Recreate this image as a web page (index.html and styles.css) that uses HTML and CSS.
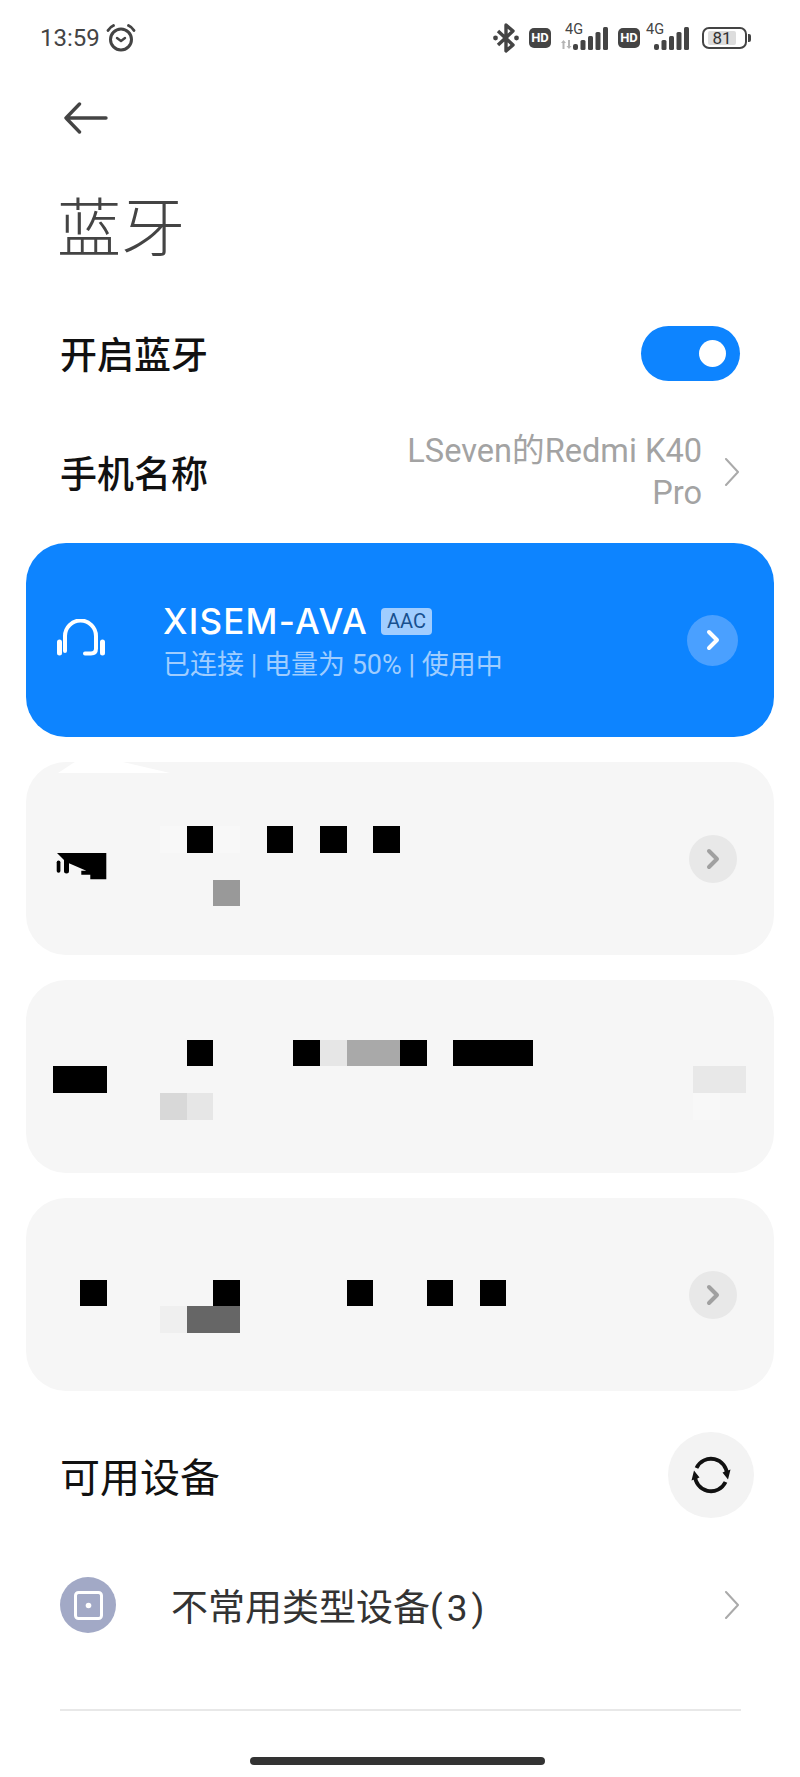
FILE: index.html
```html
<!DOCTYPE html>
<html lang="zh-CN">
<head>
  <meta charset="UTF-8">
  <meta name="viewport" content="width=device-width, initial-scale=1.0">
  <title>蓝牙</title>
  <link rel="stylesheet" href="styles.css">
</head>
<body>
  <div class="page">
    <!-- Status bar -->
    <div class="status">
      <div class="status-left">
        <span class="clock">13:59</span>
        <svg class="alarm" width="30" height="28" viewBox="0 0 30 28" fill="none" stroke="#444" stroke-linecap="round">
          <circle cx="15" cy="15.5" r="10.5" stroke-width="3"/>
          <path d="M11 14l4 3 4-3" stroke-width="2.4" stroke-linejoin="round"/>
          <path d="M2 6.5Q4 3 7.5 1.5M28 6.5Q26 3 22.5 1.5" stroke-width="2.8"/>
        </svg>
      </div>
      <div class="status-right">
        <svg class="bt" width="26" height="30" viewBox="0 0 26 30" fill="none" stroke="#444" stroke-width="3.4" stroke-linejoin="round">
          <path d="M5 8l15 14-7 6V2l7 6L5 22"/>
          <circle cx="2.5" cy="15" r="2.4" fill="#444" stroke="none"/>
          <circle cx="23.5" cy="15" r="2.4" fill="#444" stroke="none"/>
        </svg>
        <span class="hd">HD</span>
        <div class="net net-first">
          <span class="net-label">4G</span>
          <svg class="arrows" width="12" height="9" viewBox="0 0 12 9" fill="#b5b5b5"><path d="M1 3l2.5-3L6 3H4.5v6h-2V3zM6.5 6h1.5V0h2v6H11.500L9 9z"/></svg>
          <svg width="36" height="23" viewBox="0 0 36 23" fill="#444">
            <rect x="0" y="17" width="5" height="6" rx="2"/><rect x="7.500" y="13" width="5" height="10" rx="1.500"/><rect x="15" y="9" width="5" height="14" rx="1.500"/><rect x="22.500" y="5" width="5" height="18" rx="1.500"/><rect x="30" y="0" width="5" height="23" rx="1.500"/>
          </svg>
        </div>
        <span class="hd hd-second">HD</span>
        <div class="net net-second">
          <span class="net-label">4G</span>
          <svg width="36" height="23" viewBox="0 0 36 23" fill="#444">
            <rect x="0" y="17" width="5" height="6" rx="2"/><rect x="7.500" y="13" width="5" height="10" rx="1.500"/><rect x="15" y="9" width="5" height="14" rx="1.500"/><rect x="22.500" y="5" width="5" height="18" rx="1.500"/><rect x="30" y="0" width="5" height="23" rx="1.500"/>
          </svg>
        </div>
        <div class="battery"><span class="battery-level">81</span></div>
        <span class="battery-nub"></span>
      </div>
    </div>

    <!-- Header -->
    <div class="back">
      <svg width="44" height="32" viewBox="0 0 44 32" fill="none" stroke="#444" stroke-width="3.400" stroke-linecap="round" stroke-linejoin="round">
        <path d="M15.500 2L2 16l13.500 14M2 16h40"/>
      </svg>
    </div>
    <h1 class="title">蓝牙</h1>

    <div class="row row-switch">
      <span class="row-label">开启蓝牙</span>
      <span class="toggle"><span class="knob"></span></span>
    </div>
    <div class="row row-name">
      <span class="row-label">手机名称</span>
      <div class="row-value">
        <span class="value-text">LSeven的Redmi K40<br>Pro</span>
        <svg class="chevron" width="16" height="28" viewBox="0 0 16 28" fill="none" stroke="#aaa" stroke-width="2" stroke-linecap="round" stroke-linejoin="round"><path d="M2 1l12 13L2 27"/></svg>
      </div>
    </div>

    <!-- Paired devices -->
    <div class="cards">
      <div class="card card-active">
        <svg class="card-icon" width="48" height="38" viewBox="0 0 48 38" fill="none" stroke="#fff" stroke-linecap="round">
          <path d="M8 32V17a15.500 15.500 0 0 1 31 0v12.500q0 5-5 5h-6" stroke-width="4"/>
          <path d="M2.500 23v11M45.500 23v11" stroke-width="5"/>
        </svg>
        <div class="card-body">
          <div class="card-title"><span class="card-name">XISEM-AVA</span><span class="codec">AAC</span></div>
          <div class="card-sub">已连接 | 电量为 50% | 使用中</div>
        </div>
        <span class="card-go">
          <svg width="14" height="22" viewBox="0 0 14 22" fill="none" stroke="#fff" stroke-width="4" stroke-linecap="round" stroke-linejoin="round"><path d="M3 3l8 8-8 8"/></svg>
        </span>
      </div>
      <div class="card">
        <span class="card-notch"></span>
        <span class="card-go card-go-muted">
          <svg width="14" height="22" viewBox="0 0 14 22" fill="none" stroke="#a0a0a0" stroke-width="4" stroke-linecap="round" stroke-linejoin="round"><path d="M3 3l8 8-8 8"/></svg>
        </span>
      </div>
      <div class="card"></div>
      <div class="card">
        <span class="card-go card-go-muted">
          <svg width="14" height="22" viewBox="0 0 14 22" fill="none" stroke="#a0a0a0" stroke-width="4" stroke-linecap="round" stroke-linejoin="round"><path d="M3 3l8 8-8 8"/></svg>
        </span>
      </div>
    </div>

    <!-- Available devices -->
    <div class="available">
      <span class="available-label">可用设备</span>
      <span class="refresh">
        <svg width="40" height="40" viewBox="0 0 40 40" fill="none" stroke="#111" stroke-width="3.800">
          <path d="M5.500 13A16 16 0 0 1 36 20"/>
          <path d="M34.500 27A16 16 0 0 1 4 20"/>
          <path d="M31.500 17.500l8-3-2.500 10zM8.500 22.500l-8 3 2.500-10z" fill="#111" stroke="none"/>
        </svg>
      </span>
    </div>
    <div class="other">
      <span class="other-icon">
        <svg width="29" height="29" viewBox="0 0 29 29" fill="none" stroke="#fff" stroke-width="3">
          <rect x="1.500" y="1.500" width="26" height="26" rx="3"/>
          <circle cx="14.500" cy="14.500" r="2.800" fill="#fff" stroke="none"/>
        </svg>
      </span>
      <span class="other-label">不常用类型设备<span class="other-count">(3)</span></span>
      <svg class="chevron" width="16" height="28" viewBox="0 0 16 28" fill="none" stroke="#aaa" stroke-width="2" stroke-linecap="round" stroke-linejoin="round"><path d="M2 1l12 13L2 27"/></svg>
    </div>
    <div class="divider"></div>
    <div class="home-bar"></div>

    <!-- Redaction blocks sit over the cards on one 26.67px grid -->
    <div class="mosaic">
      <i class="cell col-6 row-31 tone-faint"></i>
      <i class="cell col-7 row-31 tone-black"></i>
      <i class="cell col-8 row-31 tone-faint"></i>
      <i class="cell col-10 row-31 tone-black"></i>
      <i class="cell col-12 row-31 tone-black"></i>
      <i class="cell col-14 row-31 tone-black"></i>
      <svg class="cell cell-wide col-2 row-32" viewBox="0 0 53.330 26.670" fill="#000">
        <path d="M4 0H53.330V26.300H37.300V21.700H28.300V17.700H33.300L16 10.300V18a2.500 2.500 0 0 1-5 0V7z"/>
        <rect x="3.700" y="7.400" width="3.700" height="12.300" rx="1.800"/>
      </svg>
      <i class="cell col-8 row-33 tone-99"></i>

      <i class="cell col-7 row-39 tone-black"></i>
      <i class="cell col-11 row-39 tone-black"></i>
      <i class="cell col-12 row-39 tone-e6"></i>
      <i class="cell col-13 row-39 tone-a9"></i>
      <i class="cell col-14 row-39 tone-a9"></i>
      <i class="cell col-15 row-39 tone-black"></i>
      <i class="cell col-17 row-39 tone-black"></i>
      <i class="cell col-18 row-39 tone-black"></i>
      <i class="cell col-19 row-39 tone-black"></i>
      <i class="cell col-2 row-40 tone-black"></i>
      <i class="cell col-3 row-40 tone-black"></i>
      <i class="cell col-26 row-40 tone-e8"></i>
      <i class="cell col-27 row-40 tone-e8"></i>
      <i class="cell col-6 row-41 tone-d8"></i>
      <i class="cell col-7 row-41 tone-e6"></i>
      <i class="cell col-26 row-41 tone-faint"></i>

      <i class="cell col-3 row-48 tone-black"></i>
      <i class="cell col-8 row-48 tone-black"></i>
      <i class="cell col-13 row-48 tone-black"></i>
      <i class="cell col-16 row-48 tone-black"></i>
      <i class="cell col-18 row-48 tone-black"></i>
      <i class="cell col-6 row-49 tone-ef"></i>
      <i class="cell col-7 row-49 tone-66"></i>
      <i class="cell col-8 row-49 tone-66"></i>
    </div>
  </div>
</body>
</html>
```

FILE: styles.css
```css
/* General Styles */
body {
  margin: 0;
  background-color: #fff;
  font-family: Roboto, "Noto Sans CJK SC", sans-serif;
}

.page {
  position: relative;
  width: 800px;
  height: 1777px;
  overflow: hidden;
}

/* Status bar */
.status {
  display: flex;
  justify-content: space-between;
  align-items: center;
  height: 76px;
  padding: 0 49px 0 40px;
}

.status-left,
.status-right {
  display: flex;
  align-items: center;
}

.clock {
  font-size: 24px;
  color: #444;
}

.alarm {
  margin-left: 6px;
  margin-top: -1px;
}

.hd {
  width: 22px;
  height: 20px;
  margin-left: 10px;
  border-radius: 5px;
  background-color: #444;
  color: #fff;
  font-size: 13px;
  font-weight: 700;
  line-height: 20px;
  text-align: center;
}

.hd-second {
  margin-left: 9px;
}

.net {
  position: relative;
  display: flex;
  align-items: flex-end;
  justify-content: flex-end;
  width: 50px;
  height: 24px;
}

.net-first {
  margin-left: 8px;
}

.net-label {
  position: absolute;
  top: -3px;
  left: 6px;
  font-size: 14.5px;
  line-height: 14px;
  color: #444;
}

.arrows {
  position: absolute;
  left: 1px;
  bottom: 1px;
}

.battery {
  display: flex;
  align-items: center;
  box-sizing: border-box;
  width: 45px;
  height: 22px;
  margin-left: 12px;
  padding: 3px 4px;
  border: 2.5px solid #444;
  border-radius: 7px;
}

.battery-level {
  width: 28px;
  height: 14px;
  background-color: #ddd;
  border-radius: 2px;
  font-size: 17px;
  line-height: 14px;
  text-align: center;
  color: #333;
}

.battery-nub {
  width: 3px;
  height: 8px;
  margin-left: 1px;
  border-radius: 0 2px 2px 0;
  background-color: #444;
}

/* Header */
.back {
  display: flex;
  align-items: center;
  height: 84px;
  padding-left: 64px;
}

.title {
  height: 146px;
  margin: 0;
  padding-left: 57px;
  font-size: 64px;
  font-weight: 300;
  line-height: 140px;
  color: #444;
}

/* Rows */
.row {
  display: flex;
  justify-content: space-between;
  align-items: center;
  padding: 0 60px 0 60px;
}

.row-switch {
  height: 94px;
}

.row-name {
  height: 143px;
}

.row-label {
  font-size: 37px;
  font-weight: 500;
  color: #111;
}

.toggle {
  display: flex;
  justify-content: flex-end;
  align-items: center;
  box-sizing: border-box;
  width: 99px;
  height: 55px;
  padding-right: 14px;
  border-radius: 28px;
  background-color: #0d84ff;
}

.knob {
  width: 27px;
  height: 27px;
  border-radius: 50%;
  background-color: #fff;
}

.row-value {
  display: flex;
  align-items: center;
  gap: 22px;
}

.value-text {
  font-size: 32.6px;
  line-height: 42px;
  text-align: right;
  color: #a3a3a3;
}

/* Device cards */
.cards {
  display: flex;
  flex-direction: column;
  gap: 25px;
  padding: 0 26px;
}

.card {
  position: relative;
  display: flex;
  align-items: center;
  justify-content: flex-end;
  height: 193px;
  padding: 0 36px 0 31px;
  border-radius: 40px;
  background-color: #f6f6f6;
}

.card-active {
  background-color: #0d84ff;
  height: 194px;
}

.card-icon {
  flex-shrink: 0;
  margin-top: -4px;
}

.card-body {
  flex: 1;
  padding-left: 58px;
  margin-top: 2px;
}

.card-title {
  display: flex;
  align-items: center;
  line-height: 44px;
  color: #fff;
}

.card-name {
  font-family: Inter, Roboto, sans-serif;
  font-size: 35px;
  font-weight: 500;
  letter-spacing: 1.2px;
}

.codec {
  margin-left: 13px;
  width: 51px;
  height: 27px;
  border-radius: 4px;
  background-color: #a0cdff;
  font-size: 20px;
  font-weight: 400;
  line-height: 27px;
  text-align: center;
  color: #17508f;
}

.card-sub {
  margin-top: 4px;
  font-size: 27px;
  line-height: 36px;
  color: #9fcdff;
}

.card-go {
  display: flex;
  justify-content: center;
  align-items: center;
  flex-shrink: 0;
  width: 51px;
  height: 51px;
  border-radius: 50%;
  background-color: #4aa0ff;
}

.card-go-muted {
  width: 48px;
  height: 48px;
  margin-right: 1px;
  background-color: #e8e8e8;
}

.card-notch {
  position: absolute;
  top: 0;
  left: 32px;
  width: 112px;
  height: 11px;
  background-color: #fff;
  clip-path: polygon(0 100%, 15% 0, 58% 0, 100% 100%);
}

/* Available devices */
.available {
  display: flex;
  justify-content: space-between;
  align-items: center;
  margin-top: 41px;
  padding: 0 46px 0 60px;
}

.available-label {
  font-size: 40px;
  color: #111;
}

.refresh {
  display: flex;
  justify-content: center;
  align-items: center;
  width: 86px;
  height: 86px;
  border-radius: 50%;
  background-color: #f3f3f3;
}

.other {
  display: flex;
  align-items: center;
  margin-top: 59px;
  padding: 0 60px;
}

.other-icon {
  display: flex;
  justify-content: center;
  align-items: center;
  flex-shrink: 0;
  width: 56px;
  height: 56px;
  border-radius: 50%;
  background-color: #a2a9c6;
}

.other-label {
  flex: 1;
  padding-left: 55px;
  font-size: 37px;
  color: #333;
}

.other-count {
  letter-spacing: 4px;
}

.divider {
  height: 2px;
  margin: 76px 59px 0 60px;
  background-color: #e8e8e8;
}

.home-bar {
  width: 295px;
  height: 8px;
  margin: 46px auto 0 250px;
  border-radius: 4px;
  background-color: #333;
}

/* Redaction mosaic */
.mosaic {
  position: absolute;
  top: 0;
  left: 0;
  display: grid;
  grid-template-columns: repeat(30, 26.667px);
  grid-template-rows: repeat(66, 26.667px);
}

.cell { display: block; width: 100%; height: 100%; }
.cell-wide { grid-column-end: span 2; }

.tone-black { background-color: #000; }
.tone-66 { background-color: #666; }
.tone-99 { background-color: #999; }
.tone-a9 { background-color: #a9a9a9; }
.tone-d8 { background-color: #d8d8d8; }
.tone-e6 { background-color: #e6e6e6; }
.tone-e8 { background-color: #e8e8e8; }
.tone-ef { background-color: #efefef; }
.tone-faint { background-color: #f8f8f8; }

.col-2 { grid-column-start: 3; }
.col-3 { grid-column-start: 4; }
.col-6 { grid-column-start: 7; }
.col-7 { grid-column-start: 8; }
.col-8 { grid-column-start: 9; }
.col-10 { grid-column-start: 11; }
.col-11 { grid-column-start: 12; }
.col-12 { grid-column-start: 13; }
.col-13 { grid-column-start: 14; }
.col-14 { grid-column-start: 15; }
.col-15 { grid-column-start: 16; }
.col-16 { grid-column-start: 17; }
.col-17 { grid-column-start: 18; }
.col-18 { grid-column-start: 19; }
.col-19 { grid-column-start: 20; }
.col-26 { grid-column-start: 27; }
.col-27 { grid-column-start: 28; }

.row-31 { grid-row-start: 32; }
.row-32 { grid-row-start: 33; }
.row-33 { grid-row-start: 34; }
.row-39 { grid-row-start: 40; }
.row-40 { grid-row-start: 41; }
.row-41 { grid-row-start: 42; }
.row-48 { grid-row-start: 49; }
.row-49 { grid-row-start: 50; }
```
